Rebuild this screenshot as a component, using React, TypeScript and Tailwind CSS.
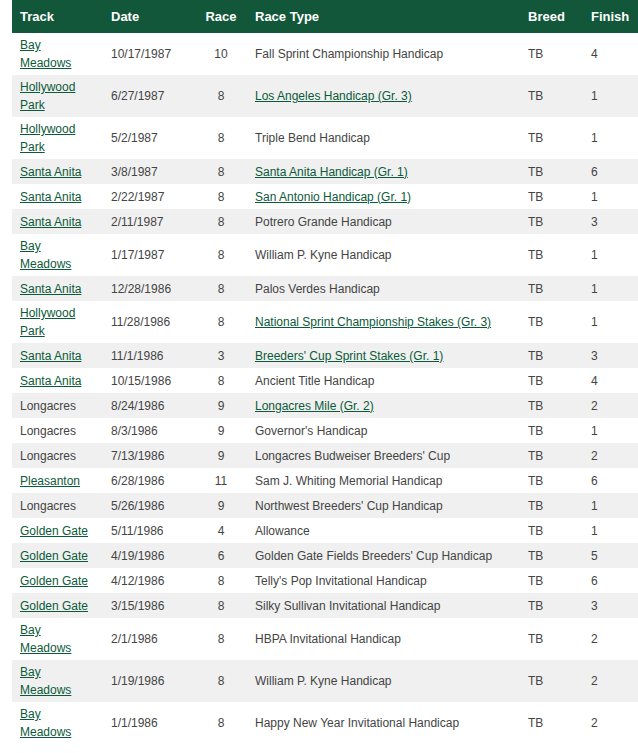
const rows: [string, string, string, string, boolean, string][] = [
  ["Bay Meadows", "10/17/1987", "10", "Fall Sprint Championship Handicap", false, "4"],
  ["Hollywood Park", "6/27/1987", "8", "Los Angeles Handicap (Gr. 3)", true, "1"],
  ["Hollywood Park", "5/2/1987", "8", "Triple Bend Handicap", false, "1"],
  ["Santa Anita", "3/8/1987", "8", "Santa Anita Handicap (Gr. 1)", true, "6"],
  ["Santa Anita", "2/22/1987", "8", "San Antonio Handicap (Gr. 1)", true, "1"],
  ["Santa Anita", "2/11/1987", "8", "Potrero Grande Handicap", false, "3"],
  ["Bay Meadows", "1/17/1987", "8", "William P. Kyne Handicap", false, "1"],
  ["Santa Anita", "12/28/1986", "8", "Palos Verdes Handicap", false, "1"],
  ["Hollywood Park", "11/28/1986", "8", "National Sprint Championship Stakes (Gr. 3)", true, "1"],
  ["Santa Anita", "11/1/1986", "3", "Breeders' Cup Sprint Stakes (Gr. 1)", true, "3"],
  ["Santa Anita", "10/15/1986", "8", "Ancient Title Handicap", false, "4"],
  ["Longacres", "8/24/1986", "9", "Longacres Mile (Gr. 2)", true, "2"],
  ["Longacres", "8/3/1986", "9", "Governor's Handicap", false, "1"],
  ["Longacres", "7/13/1986", "9", "Longacres Budweiser Breeders' Cup", false, "2"],
  ["Pleasanton", "6/28/1986", "11", "Sam J. Whiting Memorial Handicap", false, "6"],
  ["Longacres", "5/26/1986", "9", "Northwest Breeders' Cup Handicap", false, "1"],
  ["Golden Gate", "5/11/1986", "4", "Allowance", false, "1"],
  ["Golden Gate", "4/19/1986", "6", "Golden Gate Fields Breeders' Cup Handicap", false, "5"],
  ["Golden Gate", "4/12/1986", "8", "Telly's Pop Invitational Handicap", false, "6"],
  ["Golden Gate", "3/15/1986", "8", "Silky Sullivan Invitational Handicap", false, "3"],
  ["Bay Meadows", "2/1/1986", "8", "HBPA Invitational Handicap", false, "2"],
  ["Bay Meadows", "1/19/1986", "8", "William P. Kyne Handicap", false, "2"],
  ["Bay Meadows", "1/1/1986", "8", "Happy New Year Invitational Handicap", false, "2"],
];
const twoLine = ["Bay Meadows", "Hollywood Park"];
const linked = (t: string) => t !== "Longacres";

function Track({ name }: { name: string }) {
  if (twoLine.includes(name)) {
    const [a, b] = name.split(" ");
    return (
      <a className="text-[#0b5a3a] underline">
        {a}
        <br />
        {b}
      </a>
    );
  }
  return linked(name) ? <a className="text-[#0b5a3a] underline">{name}</a> : <>{name}</>;
}

export default function App() {
  return (
    <div className="bg-white pl-3 text-[12px] leading-[18px] text-[#444]" style={{ fontFamily: '"Liberation Sans", Arial, sans-serif' }}>
      <table className="w-[626px] table-fixed border-collapse">
        <colgroup>
          <col className="w-[91px]" />
          <col className="w-[92px]" />
          <col className="w-[52px]" />
          <col className="w-[273px]" />
          <col className="w-[63px]" />
          <col />
        </colgroup>
        <thead>
          <tr className="h-[33px] bg-[#12573a] text-left text-[13px] font-bold text-white">
            <th className="pl-2">Track</th>
            <th className="pl-2">Date</th>
            <th className="text-center">Race</th>
            <th className="pl-2">Race Type</th>
            <th className="pl-2">Breed</th>
            <th className="pl-2">Finish</th>
          </tr>
        </thead>
        <tbody>
          {rows.map((r, i) => (
            <tr key={i} className={`${i % 2 ? "bg-[#f0f0f0]" : "bg-white"} ${twoLine.includes(r[0]) ? "h-[42px]" : "h-[25px]"}`}>
              <td className="whitespace-nowrap py-[3px] pl-2">
                <Track name={r[0]} />
              </td>
              <td className="pl-2">{r[1]}</td>
              <td className="text-center">{r[2]}</td>
              <td className="pl-2">{r[4] ? <a className="text-[#0b5a3a] underline">{r[3]}</a> : r[3]}</td>
              <td className="pl-2">TB</td>
              <td className="pl-2">{r[5]}</td>
            </tr>
          ))}
        </tbody>
      </table>
    </div>
  );
}
